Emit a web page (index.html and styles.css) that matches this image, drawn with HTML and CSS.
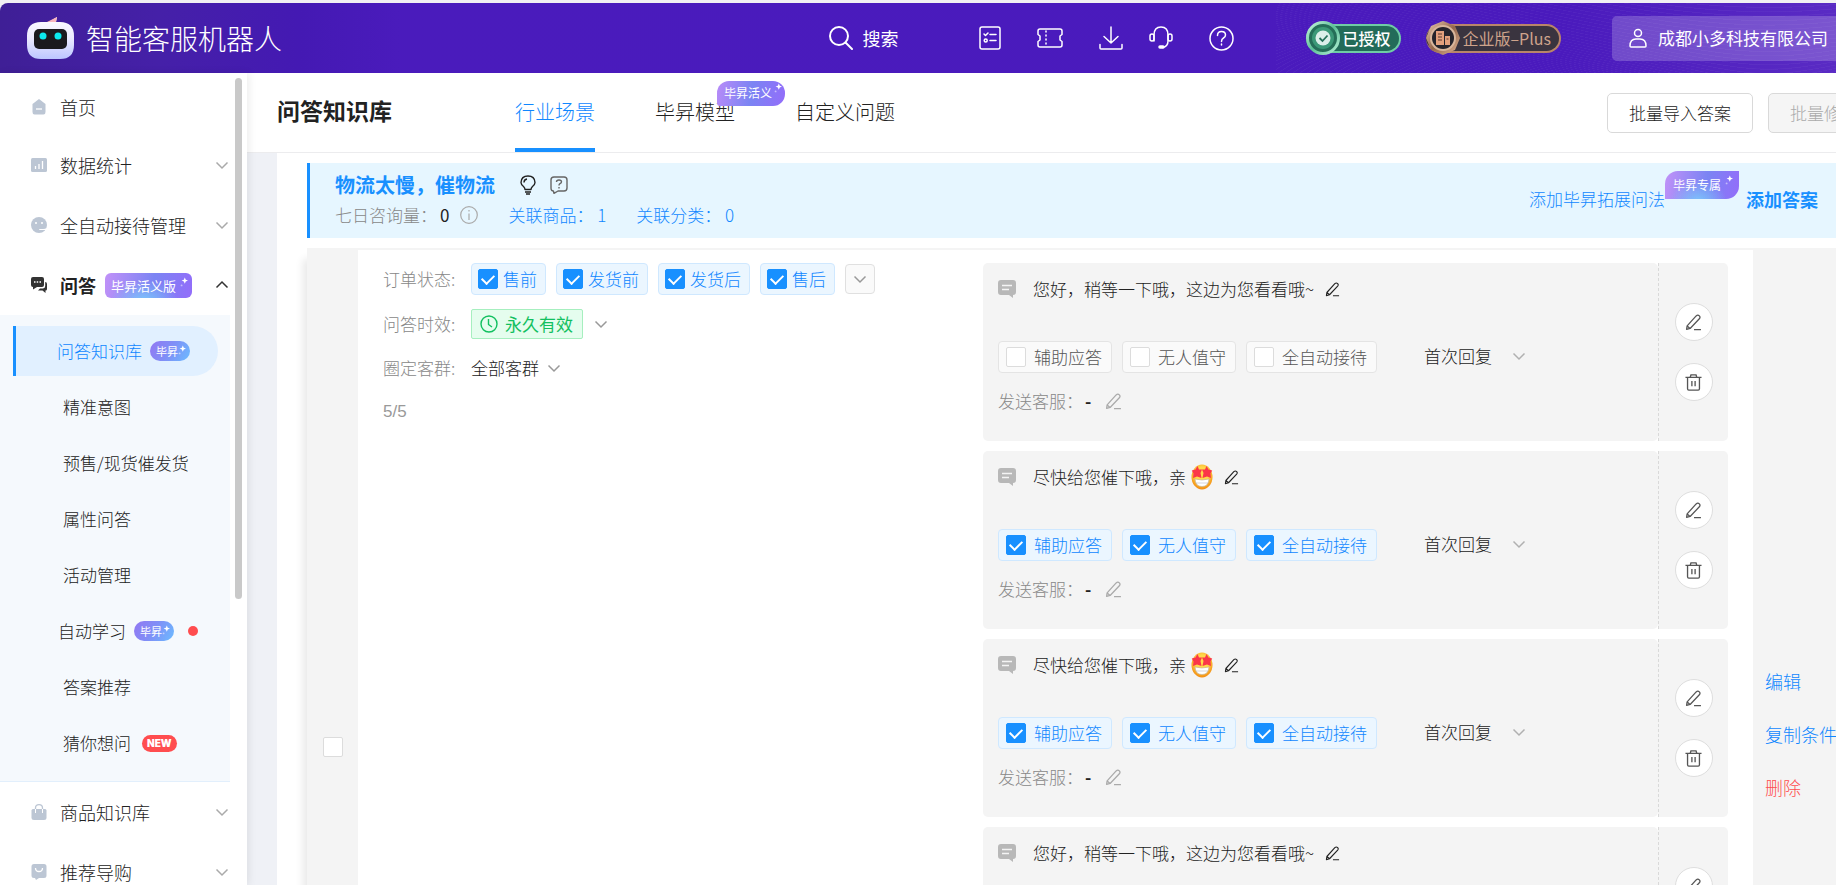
FILE: index.html
```html
<!DOCTYPE html>
<html lang="zh-CN">
<head>
<meta charset="utf-8">
<title>智能客服机器人</title>
<link rel="stylesheet" href="styles.css">
</head>
<body>
<svg class="defs" aria-hidden="true">
  <defs>
    <linearGradient id="robot" x1="0" y1="0" x2="0" y2="1"><stop offset="0" stop-color="#fff"/><stop offset=".5" stop-color="#eceaff"/><stop offset="1" stop-color="#bcc6ff"/></linearGradient>
    <radialGradient id="face" cx=".5" cy=".4" r=".6"><stop offset=".5" stop-color="#ffd84a"/><stop offset="1" stop-color="#f28a10"/></radialGradient>
    <linearGradient id="mint" x1="0" y1="0" x2="1" y2="1"><stop offset="0" stop-color="#c6f5dd"/><stop offset=".5" stop-color="#5cbf96"/><stop offset="1" stop-color="#b5f0d6"/></linearGradient>
    <linearGradient id="bronze" x1="0" y1="0" x2="1" y2="1"><stop offset="0" stop-color="#f0cfb4"/><stop offset=".5" stop-color="#93664c"/><stop offset="1" stop-color="#e3b797"/></linearGradient>
  </defs>
  <symbol id="chevron" viewBox="0 0 14 14"><path d="M1.500 4.500 7 10l5.500-5.500" fill="none" stroke="currentColor" stroke-width="1.500"/></symbol>
  <symbol id="pencil" viewBox="0 0 16 16"><path d="M1.500 14.500 2 11.200 10.500 1.800c1-.9 2.200-.8 3 0s.8 1.700 0 2.700L4.800 13.600zM2 11.200l2.800 2.400M8.500 14.700H15" fill="none" stroke="currentColor" stroke-width="1.200" stroke-linejoin="round"/></symbol>
  <symbol id="trash" viewBox="0 0 18 18"><path d="M.5 3.500h17M5.500 3.500l.8-2.500h5.400l.8 2.500M2.700 3.500v12.200q0 1.300 1.300 1.300h10q1.300 0 1.300-1.300V3.500M7.300 7.500v5.500M10.700 7.500v5.500" fill="none" stroke="currentColor" stroke-width="1.400"/></symbol>
  <symbol id="message" viewBox="0 0 18 18"><path d="M3 0h12q3 0 3 3v9q0 3-3 3v3l-4-3H3q-3 0-3-3V3q0-3 3-3z" fill="#b8b8b8"/><path d="M4 5.500h10M4 9.500h7" stroke="#f4f4f4" stroke-width="1.500"/></symbol>
  <symbol id="spark" viewBox="0 0 10 14"><path d="M6 0 7.200 2.800 10 4 7.200 5.200 6 8 4.800 5.200 2 4 4.800 2.800z" fill="#fff"/><circle cx="2" cy="10" r="1.200" fill="#fff" opacity=".5"/></symbol>
  <symbol id="star-face" viewBox="0 0 22 26"><ellipse cx="11" cy="13" rx="10.500" ry="12.500" fill="url(#face)"/><path d="M6.500 2 8 5.500h3L9.500 9l1 5-4.500-1.500L2 14l.5-4.500L.8 6.500 4.500 5.500zM15.500 2l2 3.500 3.700 1-1.700 3 .5 4.500-4-1.500L11.500 14l1-5L11 5.500h3z" fill="#fb3648"/><path d="M4 15q7 2 14 0-.5 7.500-7 7.500T4 15z" fill="#fff" stroke="#c9b59a" stroke-width=".7"/><path d="M5 19h12" stroke="#b9b9c4" stroke-width=".6"/></symbol>
</svg>

<header class="topbar">
  <svg class="logo" viewBox="0 0 47 42"><path d="M22 5 30 0l-1 5h4q14 0 14 14v9q0 14-14 14H14Q0 42 0 28v-9Q0 5 14 5z" fill="url(#robot)"/><path d="M20 5 30 0l-1 5" fill="#f8b5bd"/><rect x="7" y="12" width="33" height="20" rx="5" fill="#1b1a1e"/><ellipse cx="16" cy="19" rx="3.500" ry="3.500" fill="#0ce9ee"/><ellipse cx="31" cy="19" rx="3.500" ry="3.500" fill="#0ce9ee"/></svg>
  <h1 class="brand">智能客服机器人</h1>
  <div class="tools">
    <button class="search"><svg width="24" height="24" viewBox="0 0 24 24" class="line bold"><circle cx="10" cy="10" r="9"/><path d="m16.500 16.500 6.500 6.500"/></svg>搜索</button>
    <button aria-label="任务"><svg width="22" height="24" viewBox="0 0 22 24" class="line"><rect x="1" y="1" width="20" height="22" rx="2"/><path d="m5 8 1.500 1.500L9 7M11 8.500h6M11 14.500h6"/><circle cx="6.700" cy="14.500" r="1.500"/></svg></button>
    <button aria-label="优惠券"><svg width="26" height="20" viewBox="0 0 26 20" class="line"><path d="M3 1h20q2 0 2 2v3.500l-2 1.500v4l2 1.500V17q0 2-2 2H3q-2 0-2-2v-3.500L3 12V8L1 6.500V3q0-2 2-2z"/><path d="M9 3v14" stroke-dasharray="1 3"/></svg></button>
    <button aria-label="下载" class="near"><svg width="24" height="24" viewBox="0 0 24 24" class="line"><path d="M12 1v16M5 10.500l7 6.500 7-6.500M1 18.500v3.500q0 1 1 1h20q1 0 1-1v-3.500"/></svg></button>
    <button aria-label="客服"><svg width="24" height="24" viewBox="0 0 24 24" class="line"><path d="M5 15V9q0-8 7-8t7 8v6q0 5-5 6.500"/><rect x="1" y="8" width="4" height="7" rx="2"/><rect x="19" y="8" width="4" height="7" rx="2"/><rect x="10" y="20" width="5" height="2" rx="1" fill="#fff"/></svg></button>
    <button aria-label="帮助"><svg width="25" height="25" viewBox="0 0 25 25" class="line"><circle cx="12.500" cy="12.500" r="11.500"/><path d="M8.500 9.500q0-4 4-4t4 3.500q0 2-2 3-2 1-2 3.500M12.500 18v1"/></svg></button>
  </div>
  <span class="medal granted"><svg width="34" height="34" viewBox="0 0 34 34"><circle cx="17" cy="17" r="15.500" fill="#256e58" stroke="url(#mint)" stroke-width="3"/><circle cx="17" cy="17" r="11" fill="#3b9877"/><circle cx="17" cy="17" r="7.500" fill="#dcefe9"/><path d="m13.500 17 3 3 5-5.500" fill="none" stroke="#26705a" stroke-width="1.800"/></svg>已授权</span>
  <span class="medal plus"><svg width="34" height="36" viewBox="0 0 34 36"><path d="m17 1 12 5 5 12-5 12-12 5L5 30 0 18 5 6z" fill="url(#bronze)"/><circle cx="17" cy="18" r="13" fill="#d9b69c"/><circle cx="17" cy="18" r="11" fill="#27242c"/><path d="M10 11h8v14h-8zM19 16h5v9h-5z" fill="#e3a07d"/><path d="M12 14h4M12 17h4M12 20h4M20.500 19h2" stroke="#5b3b30"/></svg>企业版–Plus</span>
  <button class="company"><svg width="18" height="20" viewBox="0 0 18 20" class="line"><circle cx="9" cy="5" r="3.500"/><path d="M1 18q0-7 6-7h4q6 0 6 7 0 1-1 1H2q-1 0-1-1z"/></svg>成都小多科技有限公司</button>
</header>

<div class="shell">
  <nav class="sidebar">
    <a href="#" class="group first"><svg class="gicon" viewBox="0 0 16 16"><path d="M8 0 14.500 5v8q0 2.500-2 2.500h-9q-2 0-2-2.500V5z" fill="currentColor"/><path d="M5 10h6" stroke="#fff" stroke-width="1.300"/></svg>首页</a>
    <a href="#" class="group"><svg class="gicon" viewBox="0 0 16 16"><rect x="0" y="1" width="16" height="14" rx="1.500" fill="currentColor"/><path d="M4.500 9v3M8 7v5M11.500 4v8" stroke="#fff" stroke-width="1.300"/></svg>数据统计<svg class="arrow"><use href="#chevron"/></svg></a>
    <a href="#" class="group"><svg class="gicon" viewBox="0 0 16 16"><circle cx="8" cy="8" r="8" fill="currentColor"/><circle cx="5" cy="6" r="1" fill="#fff"/><circle cx="11" cy="6" r="1" fill="#fff"/><path d="M8 12h4q3 0 3.500-1.500V13H9q-1 0-1-1z" fill="#fff"/></svg>全自动接待管理<svg class="arrow"><use href="#chevron"/></svg></a>
    <a href="#" class="group open"><svg class="gicon" viewBox="0 0 16 16"><path d="M2 0h9q2 0 2 2v6q0 2-2 2H6l-4 2.500V10q-2 0-2-2V2q0-2 2-2z" fill="currentColor"/><path d="M14.200 5Q16 5 16 7v5q0 1.500-1.500 1.500V16l-3-2.500H7L9 11.500h3q2.200-.3 2.200-2.500z" fill="currentColor"/><path d="M3 5h1.500M5.700 5h1.500M8.500 5H10" stroke="#fff" stroke-width="1.500"/></svg>问答<span class="ai ai-wide">毕昇活义版<svg class="spark"><use href="#spark"/></svg></span><svg class="arrow"><use href="#chevron"/></svg></a>
    <div class="submenu">
      <a href="#" class="active">问答知识库<span class="ai ai-pill">毕昇<svg class="spark"><use href="#spark"/></svg></span></a>
      <a href="#">精准意图</a>
      <a href="#">预售/现货催发货</a>
      <a href="#">属性问答</a>
      <a href="#">活动管理</a>
      <a href="#" class="tagged">自动学习<span class="ai ai-pill">毕昇<svg class="spark"><use href="#spark"/></svg></span><i class="dot"></i></a>
      <a href="#">答案推荐</a>
      <a href="#">猜你想问<span class="new">NEW</span></a>
    </div>
    <a href="#" class="group"><svg class="gicon" viewBox="0 0 16 16"><path d="M2 5h12q1.500 0 1.500 1.500v7Q15.500 16 13 16H3Q.5 16 .5 13.500v-7Q.5 5 2 5z" fill="currentColor"/><path d="M4.500 5V4Q4.500.7 8 .7T11.500 4v1" fill="none" stroke="currentColor" stroke-width="1.300"/><path d="M4.500 5v4M11.500 5v4" stroke="#fff"/></svg>商品知识库<svg class="arrow"><use href="#chevron"/></svg></a>
    <a href="#" class="group"><svg class="gicon" viewBox="0 0 16 16"><path d="M3 0h10q2.500 0 2.500 2.500v9Q15.500 14 13 14H8l-3 2-1-2H3Q.5 14 .5 11.500v-9Q.5 0 3 0z" fill="currentColor"/><path d="M4.500 4q0 3.500 3.500 3.500T11.500 4" fill="none" stroke="#fff" stroke-width="1.300"/></svg>推荐导购<svg class="arrow"><use href="#chevron"/></svg></a>
    <div class="thumb"></div>
  </nav>

  <main class="main">
    <div class="pagehead">
      <h2>问答知识库</h2>
      <div class="tabs">
        <a href="#" class="tab current">行业场景</a>
        <a href="#" class="tab">毕昇模型<span class="ai ai-tab">毕昇活义<svg class="spark"><use href="#spark"/></svg></span></a>
        <a href="#" class="tab">自定义问题</a>
      </div>
      <div class="actions">
        <button>批量导入答案</button>
        <button disabled>批量修改答案</button>
      </div>
    </div>

    <div class="panel">
      <section class="question">
        <div class="question-info">
          <div class="question-title">
            <h3>物流太慢，催物流</h3>
            <svg width="16" height="20" viewBox="0 0 16 20" class="bulb"><path d="M5 14.500q0-1.500-1.500-3Q1 9.500 1 7.500 1.300 1 8 1t7 6.500q0 2-2.500 4-1.500 1.500-1.500 3zM4 7.500Q4 4.500 7 4M5 17h6M6 19h4"/></svg>
            <svg width="18" height="18" viewBox="0 0 18 18" class="ask"><path d="M4 1h10q3 0 3 3v8q0 3-3 3H8l-4 2.300-.6-2.300Q1 15 1 12V4q0-3 3-3zM6.500 6q0-2 2.500-2t2.500 1.800Q11.500 7 10 7.700 9 8.200 9 9.500M9 11v1.400"/></svg>
          </div>
          <div class="stats">
            <span class="muted">七日咨询量：</span><span class="count">0</span>
            <svg width="18" height="18" viewBox="0 0 18 18" class="info"><circle cx="9" cy="9" r="8.300"/><path d="M9 7.500V14M9 4v1.500"/></svg>
            <a href="#">关联商品：&nbsp;1</a>
            <a href="#">关联分类：&nbsp;0</a>
          </div>
        </div>
        <a href="#" class="extend">添加毕昇拓展问法</a><span class="ai ai-leaf">毕昇专属<svg class="spark"><use href="#spark"/></svg></span>
        <a href="#" class="add">添加答案</a>
      </section>

      <section class="record">
        <div class="pick"><input type="checkbox" aria-label="选择"></div>
        <div class="filters">
          <div class="frow"><span class="label">订单状态:</span>
            <div class="chips">
              <label class="chip"><input type="checkbox" checked>售前</label>
              <label class="chip"><input type="checkbox" checked>发货前</label>
              <label class="chip"><input type="checkbox" checked>发货后</label>
              <label class="chip"><input type="checkbox" checked>售后</label>
              <button class="more" aria-label="更多"><svg class="caret"><use href="#chevron"/></svg></button>
            </div>
          </div>
          <div class="frow"><span class="label">问答时效:</span><span class="valid"><svg width="18" height="18" viewBox="0 0 18 18"><circle cx="9" cy="9" r="8"/><path d="M8.500 4v5.500L12 12"/></svg>永久有效</span><button class="plain" aria-label="修改时效"><svg class="caret"><use href="#chevron"/></svg></button></div>
          <div class="frow"><label class="label" for="crowd">圈定客群:</label><span class="pickbox"><select id="crowd"><option>全部客群</option></select><svg class="caret"><use href="#chevron"/></svg></span></div>
          <div class="frow total">5/5</div>
        </div>

        <div class="answers">
          <article class="answer">
            <div class="answer-body">
              <div class="reply"><svg class="msg"><use href="#message"/></svg><span>您好，稍等一下哦，这边为您看看哦~</span><button class="plain" aria-label="修改"><svg class="pen"><use href="#pencil"/></svg></button></div>
              <div class="modes">
                <label class="chip"><input type="checkbox">辅助应答</label>
                <label class="chip"><input type="checkbox">无人值守</label>
                <label class="chip"><input type="checkbox">全自动接待</label>
                <span class="pickbox"><select aria-label="回复时机"><option>首次回复</option></select><svg class="caret"><use href="#chevron"/></svg></span>
              </div>
              <div class="sender"><span class="muted">发送客服：</span><b>-</b><button class="plain" aria-label="修改客服"><svg class="pen light"><use href="#pencil"/></svg></button></div>
            </div>
            <div class="ops"><button aria-label="编辑"><svg class="op"><use href="#pencil"/></svg></button><button aria-label="删除"><svg class="op"><use href="#trash"/></svg></button></div>
          </article>
          <article class="answer">
            <div class="answer-body">
              <div class="reply"><svg class="msg"><use href="#message"/></svg><span>尽快给您催下哦，亲</span><svg class="emoji"><use href="#star-face"/></svg><button class="plain" aria-label="修改"><svg class="pen"><use href="#pencil"/></svg></button></div>
              <div class="modes">
                <label class="chip"><input type="checkbox" checked>辅助应答</label>
                <label class="chip"><input type="checkbox" checked>无人值守</label>
                <label class="chip"><input type="checkbox" checked>全自动接待</label>
                <span class="pickbox"><select aria-label="回复时机"><option>首次回复</option></select><svg class="caret"><use href="#chevron"/></svg></span>
              </div>
              <div class="sender"><span class="muted">发送客服：</span><b>-</b><button class="plain" aria-label="修改客服"><svg class="pen light"><use href="#pencil"/></svg></button></div>
            </div>
            <div class="ops"><button aria-label="编辑"><svg class="op"><use href="#pencil"/></svg></button><button aria-label="删除"><svg class="op"><use href="#trash"/></svg></button></div>
          </article>
          <article class="answer">
            <div class="answer-body">
              <div class="reply"><svg class="msg"><use href="#message"/></svg><span>尽快给您催下哦，亲</span><svg class="emoji"><use href="#star-face"/></svg><button class="plain" aria-label="修改"><svg class="pen"><use href="#pencil"/></svg></button></div>
              <div class="modes">
                <label class="chip"><input type="checkbox" checked>辅助应答</label>
                <label class="chip"><input type="checkbox" checked>无人值守</label>
                <label class="chip"><input type="checkbox" checked>全自动接待</label>
                <span class="pickbox"><select aria-label="回复时机"><option>首次回复</option></select><svg class="caret"><use href="#chevron"/></svg></span>
              </div>
              <div class="sender"><span class="muted">发送客服：</span><b>-</b><button class="plain" aria-label="修改客服"><svg class="pen light"><use href="#pencil"/></svg></button></div>
            </div>
            <div class="ops"><button aria-label="编辑"><svg class="op"><use href="#pencil"/></svg></button><button aria-label="删除"><svg class="op"><use href="#trash"/></svg></button></div>
          </article>
          <article class="answer">
            <div class="answer-body">
              <div class="reply"><svg class="msg"><use href="#message"/></svg><span>您好，稍等一下哦，这边为您看看哦~</span><button class="plain" aria-label="修改"><svg class="pen"><use href="#pencil"/></svg></button></div>
              <div class="modes"></div>
            </div>
            <div class="ops"><button aria-label="编辑"><svg class="op"><use href="#pencil"/></svg></button><button aria-label="删除"><svg class="op"><use href="#trash"/></svg></button></div>
          </article>
        </div>

        <div class="manage">
          <a href="#">编辑</a>
          <a href="#">复制条件</a>
          <a href="#" class="danger">删除</a>
        </div>
      </section>
    </div>
  </main>
</div>
</body>
</html>
```

FILE: styles.css
```css
* { box-sizing: border-box; }

body {
  margin: 0;
  height: 100vh;
  display: flex;
  flex-direction: column;
  overflow: hidden;
  padding-top: 3px;
  background: #f1f0f3;
  color: #222;
  font: 300 17px/24px "Noto Sans CJK SC", sans-serif;
}

a { color: #1087ff; text-decoration: none; white-space: nowrap; }
button, select, input { font: inherit; color: inherit; margin: 0; }
button { padding: 0; border: 0; background: none; display: flex; align-items: center; white-space: nowrap; cursor: pointer; }
h1, h2, h3 { margin: 0; }
svg { flex: none; display: block; }
.defs { position: absolute; width: 0; height: 0; }
.line { fill: none; stroke: #fff; stroke-width: 1.500; stroke-linecap: round; stroke-linejoin: round; }
.line.bold { stroke-width: 2; }
.muted { color: #888; }

/* top bar */
.topbar {
  flex: none;
  height: 70px;
  display: flex;
  align-items: center;
  padding-left: 27px;
  border-top-left-radius: 8px;
  color: #fff;
  background:
    repeating-radial-gradient(ellipse at 88% 130%, transparent 0 5px, rgba(255, 255, 255, .04) 6px 7px) right / 560px 100% no-repeat,
    radial-gradient(ellipse at 90px 90px, rgba(150, 110, 210, .35), transparent 160px),
    linear-gradient(90deg, #3f1f96 0, #4520a8 160px, #4419b3 300px, #4a1bbc 400px, #4a1abd 85%, #5a2bc4 100%);
}
.logo { width: 47px; height: 42px; }
.brand { margin-left: 12px; font-size: 28px; line-height: 40px; font-weight: 300; white-space: nowrap; }
.tools { margin-left: auto; display: flex; align-items: center; gap: 36px; }
.tools .near { margin-right: -10px; }
.search { gap: 10px; margin-right: 44px; font-size: 18px; font-weight: 400; }
.medal { display: flex; align-items: center; white-space: nowrap; height: 29px; border-radius: 15px; font-weight: 500; font-size: 16px; }
.granted { margin-left: 72px; padding-right: 8px; gap: 3px; background: #236b59; border: 2px solid #6fcca5; border-left: 0; }
.plus { margin-left: 25px; padding-right: 8px; gap: 3px; color: #cfa48c; background: #3a343f; border: 2px solid #b98569; border-left: 0; font-weight: 400; }
.company { margin-left: 51px; height: 45px; gap: 11px; padding: 0 8px 0 17px; border-radius: 5px 0 0 5px; background: rgba(255, 255, 255, .2); font-weight: 400; }

.shell { flex: 1; display: flex; min-height: 0; background: #fff; }

/* sidebar */
.sidebar {
  position: relative;
  z-index: 2;
  flex: none;
  width: 247px;
  padding-top: 6px;
  overflow: hidden;
  background: #fff;
  box-shadow: 2px 0 8px rgba(0, 0, 0, .08);
  font-size: 18px;
}
.sidebar a { color: #222; }
.thumb { position: absolute; top: 5px; right: 5px; width: 7px; height: 521px; border-radius: 4px; background: #c9c9c9; }
.group { display: flex; align-items: center; height: 60px; padding: 0 18px 0 31px; }
.group.first { height: 56px; }
.gicon { width: 16px; height: 16px; margin-right: 13px; color: #bcc6d4; }
.arrow { width: 14px; height: 14px; margin-left: auto; color: #aaa; }
.group.open { font-weight: 700; }
.open .gicon { color: #333; }
.open .arrow { transform: rotate(180deg); color: #333; }
.submenu { width: 230px; padding: 11px 0 10px; background: #f5f9fd; border-bottom: 1px solid #e2effc; font-size: 17px; }
.submenu a { display: flex; align-items: center; height: 56px; padding-left: 63px; }
.submenu .tagged { padding-left: 58px; }
.submenu .active {
  height: 50px;
  margin: 0 12px 3px 13px;
  padding-left: 41px;
  border-left: 3px solid #1890ff;
  border-radius: 0 25px 25px 0;
  background: #e1f0ff;
  color: #1087ff;
}
.dot { width: 10px; height: 10px; margin-left: 14px; border-radius: 50%; background: #ff4d4f; }
.new { margin-left: 11px; padding: 0 5px; border-radius: 9px; background: #ff4d4f; color: #fff; font: 900 10px/17px Inter, sans-serif; }

.ai {
  display: flex;
  align-items: flex-start;
  color: #fff;
  font-weight: 400;
  white-space: nowrap;
  background: radial-gradient(ellipse at 45% 110%, #7cc4fb, transparent 50%), linear-gradient(100deg, #c191f8, #7b84f3 55%, #936dfa);
}
.spark { width: 8px; height: 12px; }
.ai-wide { margin-left: 9px; height: 25px; padding: 0 4px 0 6px; border-radius: 6px; font-size: 13px; line-height: 25px; gap: 4px; }
.ai-pill { margin-left: 8px; height: 20px; padding: 0 4px 0 6px; border-radius: 10px; font-size: 11px; line-height: 20px; background: linear-gradient(120deg, #9377f2, #7f90f7 50%, #6bbcff); }
.ai-wide .spark, .ai-pill .spark, .ai-leaf .spark { margin-top: 4px; }

/* page head */
.main { flex: 1; min-width: 0; display: flex; flex-direction: column; overflow: hidden; background: #eff1f6; }
.pagehead { flex: none; height: 80px; display: flex; align-items: center; padding-left: 30px; background: #fff; border-bottom: 1px solid #ececee; }
.pagehead h2 { width: 238px; padding-bottom: 5px; font-size: 23px; font-weight: 700; }
.tabs { align-self: stretch; display: flex; gap: 60px; padding-right: 61px; font-size: 20px; }
.tab { position: relative; padding-top: 1px; line-height: 75px; color: #222; }
.tab.current { color: #1087ff; border-bottom: 4px solid #1890ff; }
.ai-tab { position: absolute; left: 62px; top: 8px; height: 25px; padding: 0 3px 0 7px; border-radius: 12px 12px 12px 3px; font-size: 12px; line-height: 24px; gap: 2px; background: linear-gradient(100deg, #b88bf8, #7b84f3 50%, #936dfa); }
.ai-tab .spark { margin-top: 2px; }
.actions { margin-left: auto; margin-right: -78px; display: flex; gap: 15px; }
.actions button { height: 40px; padding: 0 21px; border: 1px solid #d9d9d9; border-radius: 5px; background: #fff; }
.actions button:disabled { background: #f5f5f5; color: #aaa; }

.panel { flex: 1; min-height: 0; margin-left: 30px; padding: 10px 0 0 30px; background: #fff; }
.question {
  display: flex;
  align-items: center;
  min-height: 75px;
  padding: 0 18px 4px 25px;
  border-left: 3px solid #1890ff;
  background: #e6f6ff;
}
.question-info { margin-right: auto; padding-top: 3px; }
.question-title { display: flex; align-items: center; height: 30px; }
.question-title h3 { font-size: 20px; font-weight: 700; color: #1890ff; }
.bulb { margin: 0 14px 0 25px; }
.bulb, .ask, .info, .valid svg { fill: none; stroke: currentColor; stroke-width: 1.400; stroke-linejoin: round; }
.ask { color: #666; }
.info { color: #aaa; stroke-width: 1.200; margin-left: 11px; }
.stats { display: flex; align-items: center; height: 30px; white-space: nowrap; }
.stats a { margin-left: 30px; }
.count { margin-left: 3px; font-weight: 400; }
.ai-leaf { height: 28px; margin: 0 7px 28px 0; padding: 0 6px 0 8px; gap: 4px; border-radius: 13px 0 13px 0; font-size: 12px; line-height: 28px; }
.add { font-size: 18px; font-weight: 700; color: #1890ff; }

/* record row */
.record {
  display: grid;
  grid-template-columns: 51px minmax(0, 1fr) 770px 83px;
  min-height: 974px;
  margin-top: 10px;
  border-top: 2px solid #f4f4f4;
  background: #fff;
  box-shadow: -5px 10px 8px -1px rgba(0, 0, 0, .09);
}
.pick { display: flex; align-items: center; justify-content: center; padding-top: 22px; background: #f4f4f4; }
.filters { display: flex; flex-direction: column; gap: 14px; padding: 13px 0 0 25px; }
.frow { display: flex; align-items: center; min-height: 30px; white-space: nowrap; }
.label { width: 88px; color: #888; }
.chips { display: flex; align-items: center; gap: 10px; }
.chip { display: flex; align-items: center; gap: 5px; height: 32px; padding: 0 8px 0 6px; border: 1px solid #e4e4e4; border-radius: 4px; background: #fafafa; color: #555; white-space: nowrap; }
.chip:has(:checked) { border-color: #cfe8ff; background: #ebf6ff; color: #1087ff; }

input[type="checkbox"] {
  appearance: none;
  flex: none;
  display: grid;
  place-items: center;
  width: 20px;
  height: 20px;
  border: 1px solid #dcdcdc;
  border-radius: 2px;
  background: #fff;
}
input[type="checkbox"]:checked { border-color: #1890ff; background: #1890ff; }
input[type="checkbox"]:checked::after { content: ""; width: 6px; height: 10px; margin-bottom: 3px; border: solid #fff; border-width: 0 2px 2px 0; transform: rotate(45deg); }

.caret { width: 14px; height: 14px; color: #999; }
.more { width: 30px; height: 30px; justify-content: center; border: 1px solid #e0e0e0; border-radius: 4px; background: #fafafa; }
.valid { display: flex; align-items: center; gap: 7px; height: 30px; margin-right: 11px; padding: 0 9px 0 8px; border: 1px solid #a6efbf; border-radius: 2px; background: #e5fdee; color: #12c060; font-weight: 400; }
.pickbox { display: flex; align-items: center; }
select { appearance: none; padding: 0; border: 0; background: none; line-height: 24px; color: #222; }
.pickbox .caret { margin-left: 8px; }
.total { color: #999; font-family: "Liberation Sans", sans-serif; font-weight: 400; }

.answers { display: flex; flex-direction: column; gap: 10px; padding: 13px 25px 0 0; }
.answer { display: flex; min-height: 178px; }
.answer-body { flex: 1; padding: 14px 15px 28px; border-radius: 5px; background: #f4f4f4; }
.reply { display: flex; align-items: center; height: 24px; }
.msg { width: 18px; height: 18px; margin-right: 17px; }
.emoji { width: 22px; height: 26px; margin-left: 5px; }
.pen { width: 15px; height: 15px; margin-left: 11px; }
.pen.light { width: 17px; height: 17px; margin-left: 14px; color: #aaa; }
.modes { display: flex; align-items: center; gap: 10px; margin: 40px 0 16px; }
.modes .chip { gap: 8px; padding: 0 9px 0 7px; }
.modes .pickbox { margin-left: 37px; padding-bottom: 3px; }
.modes .pickbox .caret { margin-left: 20px; color: #b0b0b0; }
.sender { display: flex; align-items: center; height: 24px; }
.sender b { width: 6px; margin-left: 2px; font-weight: 700; }
.ops { display: flex; flex-direction: column; justify-content: center; align-items: center; gap: 22px; width: 70px; border-left: 1px dashed #d9d9d9; border-radius: 0 5px 5px 0; background: #f4f4f4; }
.ops button { width: 38px; height: 38px; justify-content: center; border: 1px solid #dedede; border-radius: 50%; background: #fff; color: #555; }
.op { width: 17px; height: 17px; }

.manage { display: flex; flex-direction: column; justify-content: center; gap: 29px; padding: 0 0 5px 12px; overflow: hidden; background: #f4f4f4; font-size: 18px; }
.danger { color: #ff4d4f; }
```
